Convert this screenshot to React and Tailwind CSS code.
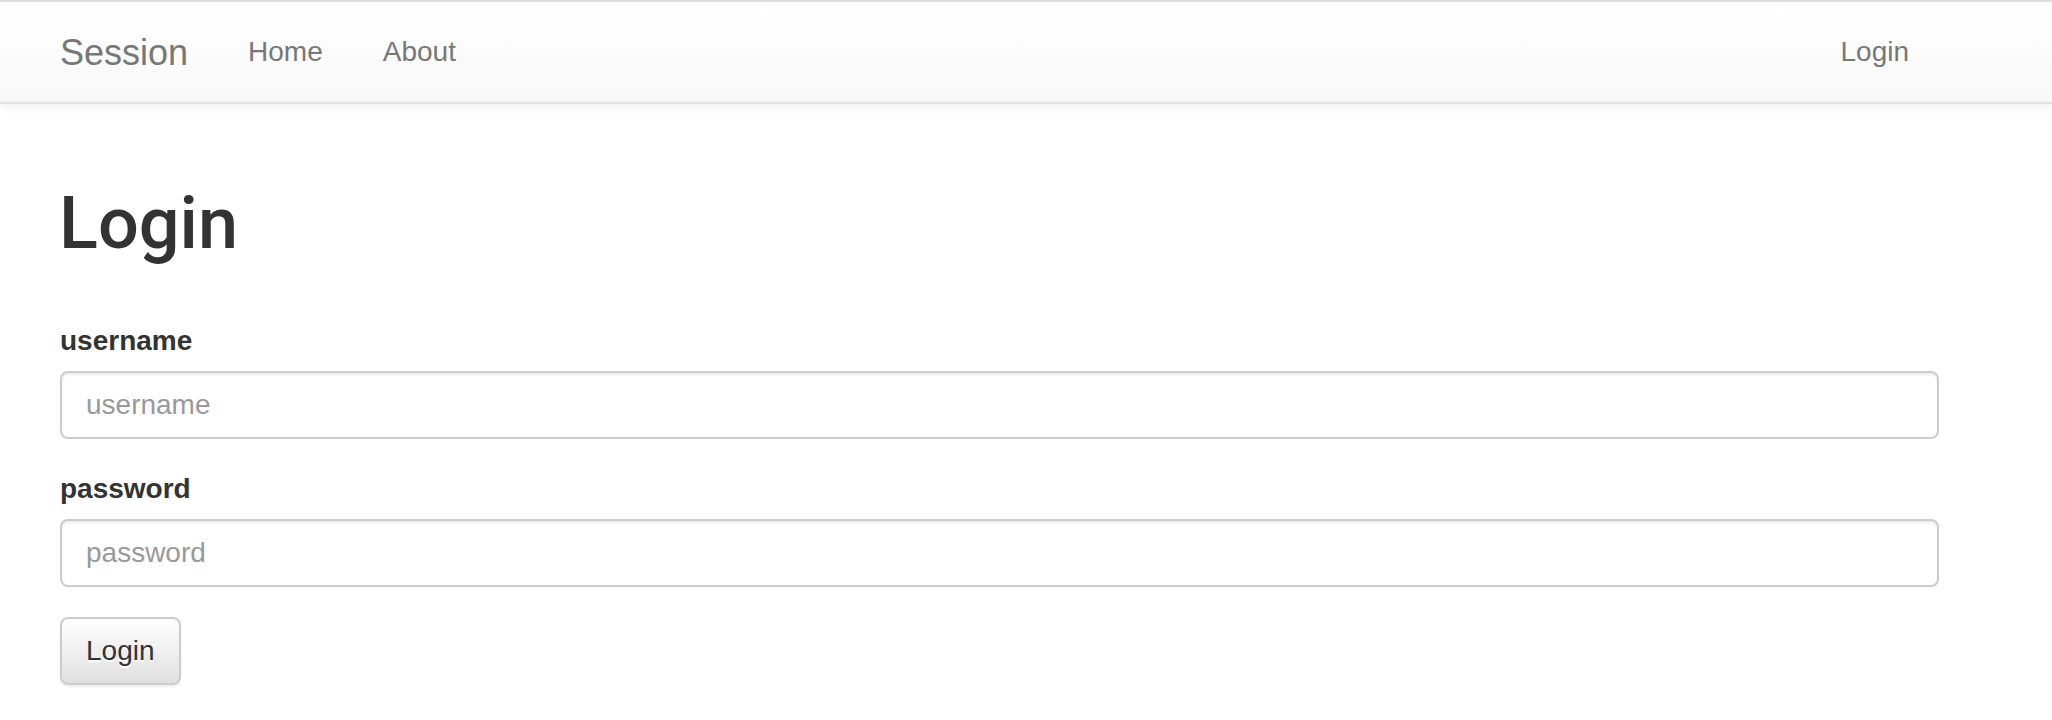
import React from "react";

export default function App() {
  const font = { fontFamily: '"Liberation Sans", Arial, Helvetica, sans-serif' };
  return (
    <div className="min-h-[720px] bg-white text-[#333]" style={font}>
      <nav className="w-full h-[104px] border-y-2 border-[#dddddd] border-b-[#e2e2e2] bg-gradient-to-b from-white to-[#f8f8f8] shadow-[0_2px_10px_rgba(0,0,0,0.075)]">
        <div className="flex pl-[30px] pr-[113px]">
          <a className="block px-[30px] pt-[31px] pb-[29px] text-[36px] leading-[40px] text-[#777]">Session</a>
          <ul className="flex">
            <li><a className="block px-[30px] py-[30px] text-[28px] leading-[40px] text-[#777]">Home</a></li>
            <li><a className="block px-[30px] py-[30px] text-[28px] leading-[40px] text-[#777]">About</a></li>
          </ul>
          <ul className="flex ml-auto">
            <li><a className="block px-[30px] py-[30px] text-[28px] leading-[40px] text-[#777]">Login</a></li>
          </ul>
        </div>
      </nav>
      <main className="pl-[60px] pr-[113px] pt-[80px]">
        <h1 className="font-['Roboto',_'Liberation_Sans',_sans-serif] text-[72px] leading-[79px] font-medium text-[#333] -ml-[1px]">Login</h1>
        <form className="mt-[58px]" onSubmit={(e) => e.preventDefault()}>
          <div className="mb-[30px]">
            <label className="block mb-[10px] text-[28px] leading-[40px] font-bold text-[#333]">username</label>
            <input
              type="text"
              placeholder="username"
              className="block w-full h-[68px] px-[24px] py-[12px] text-[28px] leading-[40px] text-[#555] border-2 border-[#cccccc] rounded-[8px] shadow-[inset_0_2px_2px_rgba(0,0,0,0.075)] placeholder:text-[#999] outline-none"
            />
          </div>
          <div className="mb-[30px]">
            <label className="block mb-[10px] text-[28px] leading-[40px] font-bold text-[#333]">password</label>
            <input
              type="password"
              placeholder="password"
              className="block w-full h-[68px] px-[24px] py-[12px] text-[28px] leading-[40px] text-[#555] border-2 border-[#cccccc] rounded-[8px] shadow-[inset_0_2px_2px_rgba(0,0,0,0.075)] placeholder:text-[#999] outline-none"
            />
          </div>
          <button
            type="submit"
            className="h-[68px] px-[24px] py-[12px] text-[28px] leading-[40px] text-[#333] border-2 border-[#cccccc] rounded-[8px] bg-gradient-to-b from-white to-[#e0e0e0] shadow-[0_2px_2px_rgba(0,0,0,0.075)] [text-shadow:0_2px_0_#fff]"
          >
            Login
          </button>
        </form>
      </main>
    </div>
  );
}
